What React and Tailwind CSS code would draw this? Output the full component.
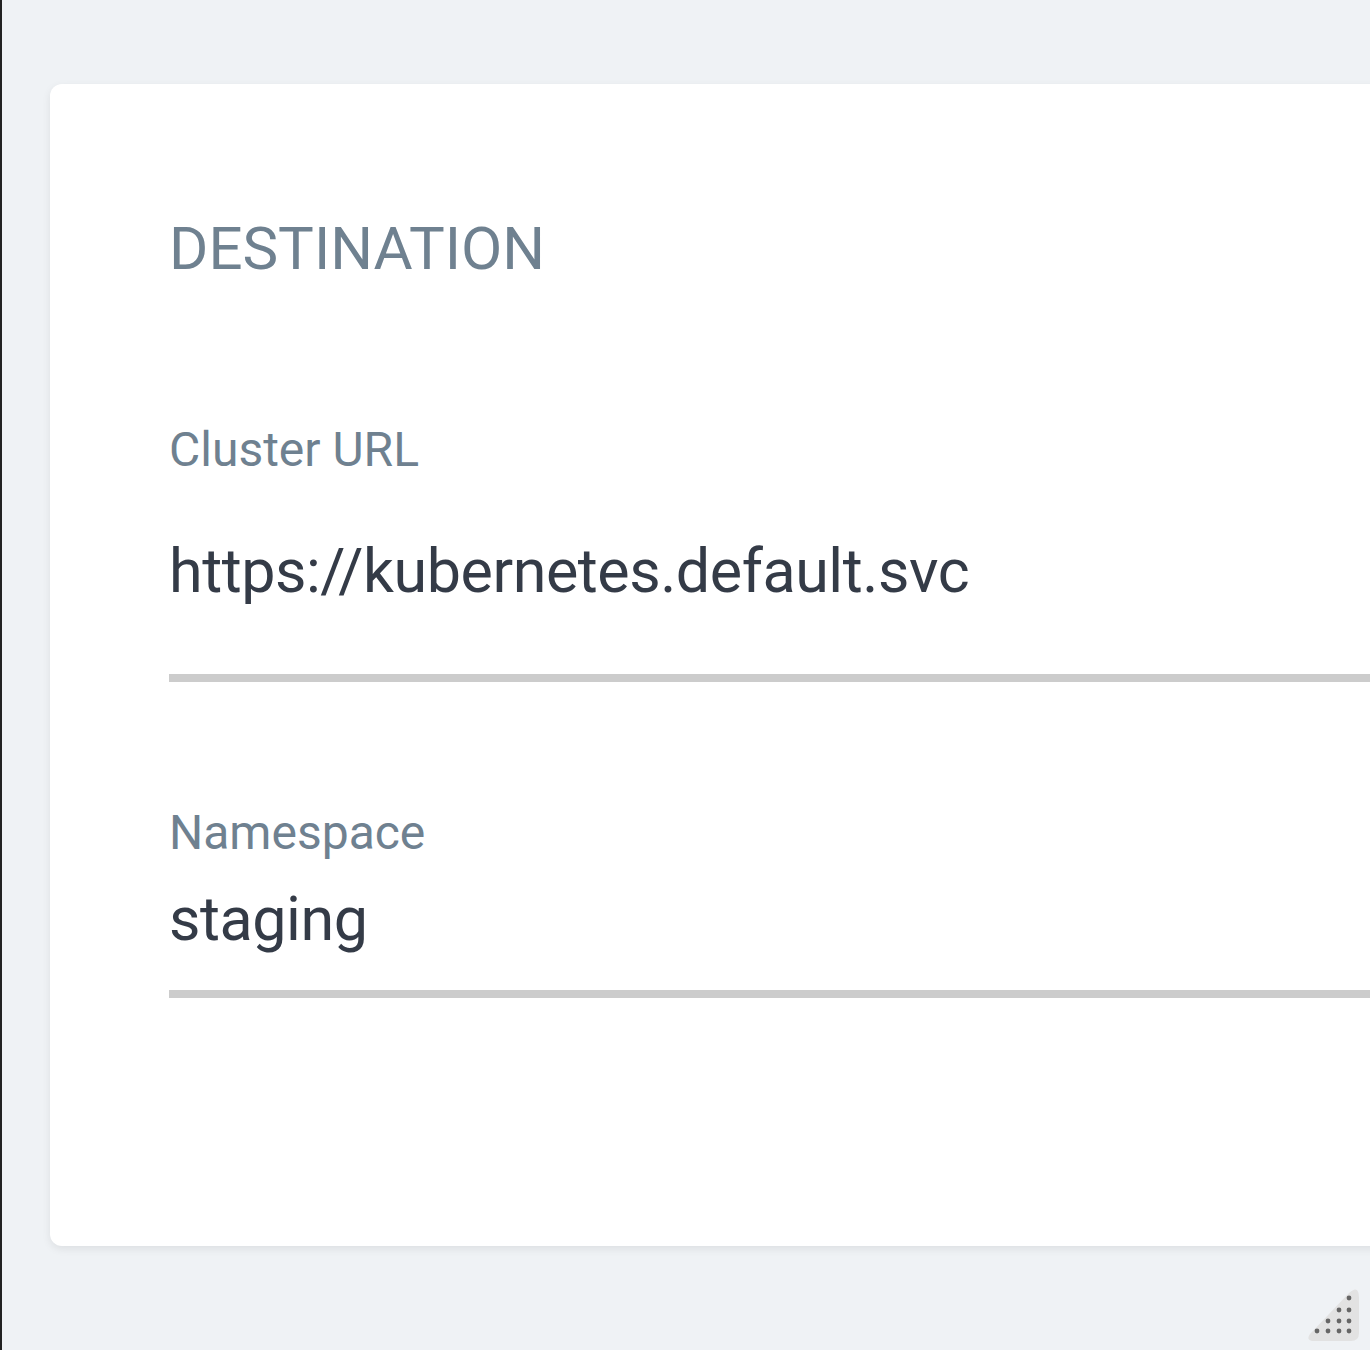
import React from 'react';

const Field = ({ label, value, valueGap, lineGap }) => (
  <div className="flex flex-col">
    <div className="leading-none text-[48px] text-[#6f8190]">{label}</div>
    <div className={`leading-none text-[61px] tracking-[-0.45px] text-[#343b47] ${valueGap}`}>{value}</div>
    <div className={`h-[8px] bg-[#cccccc] ${lineGap}`}></div>
  </div>
);

const ResizeGrip = () => (
  <svg className="absolute right-[10px] bottom-[9px]" width="53" height="53" viewBox="0 0 53 53">
    <path d="M3 46 L42 5 Q52 -4 52 10 L52 45 Q52 53 44 53 L8 53 Q-2 53 3 46 Z" fill="#e2e2e2" />
    {[
      [42, 10],
      [32, 22], [42, 22],
      [21, 33], [32, 33], [42, 33],
      [10, 43], [21, 43], [32, 43], [42, 43],
    ].map(([cx, cy]) => (
      <circle key={`${cx}-${cy}`} cx={cx} cy={cy} r="2.4" fill="#666666" />
    ))}
  </svg>
);

export default function App() {
  return (
    <div
      className="relative h-[1350px] w-[1370px] overflow-hidden bg-[#eff2f5] border-l-[2px] border-[#222222]"
      style={{ fontFamily: 'Roboto, "Liberation Sans", sans-serif' }}
    >
      <div className="ml-[48px] mt-[84px] w-[1400px] rounded-[12px] bg-white pl-[119px] pt-[135px] pb-[248px] shadow-[0_3px_8px_rgba(0,0,0,0.08)]">
        <h2 className="leading-none text-[60px] text-[#6f8190]">DESTINATION</h2>

        <div className="mt-[147px] flex flex-col">
          <Field
            label="Cluster URL"
            value="https://kubernetes.default.svc"
            valueGap="mt-[67px]"
            lineGap="mt-[72px]"
          />
          <div className="mt-[127px]">
            <Field
              label="Namespace"
              value="staging"
              valueGap="mt-[32px]"
              lineGap="mt-[40px]"
            />
          </div>
        </div>
      </div>
      <ResizeGrip />
    </div>
  );
}
